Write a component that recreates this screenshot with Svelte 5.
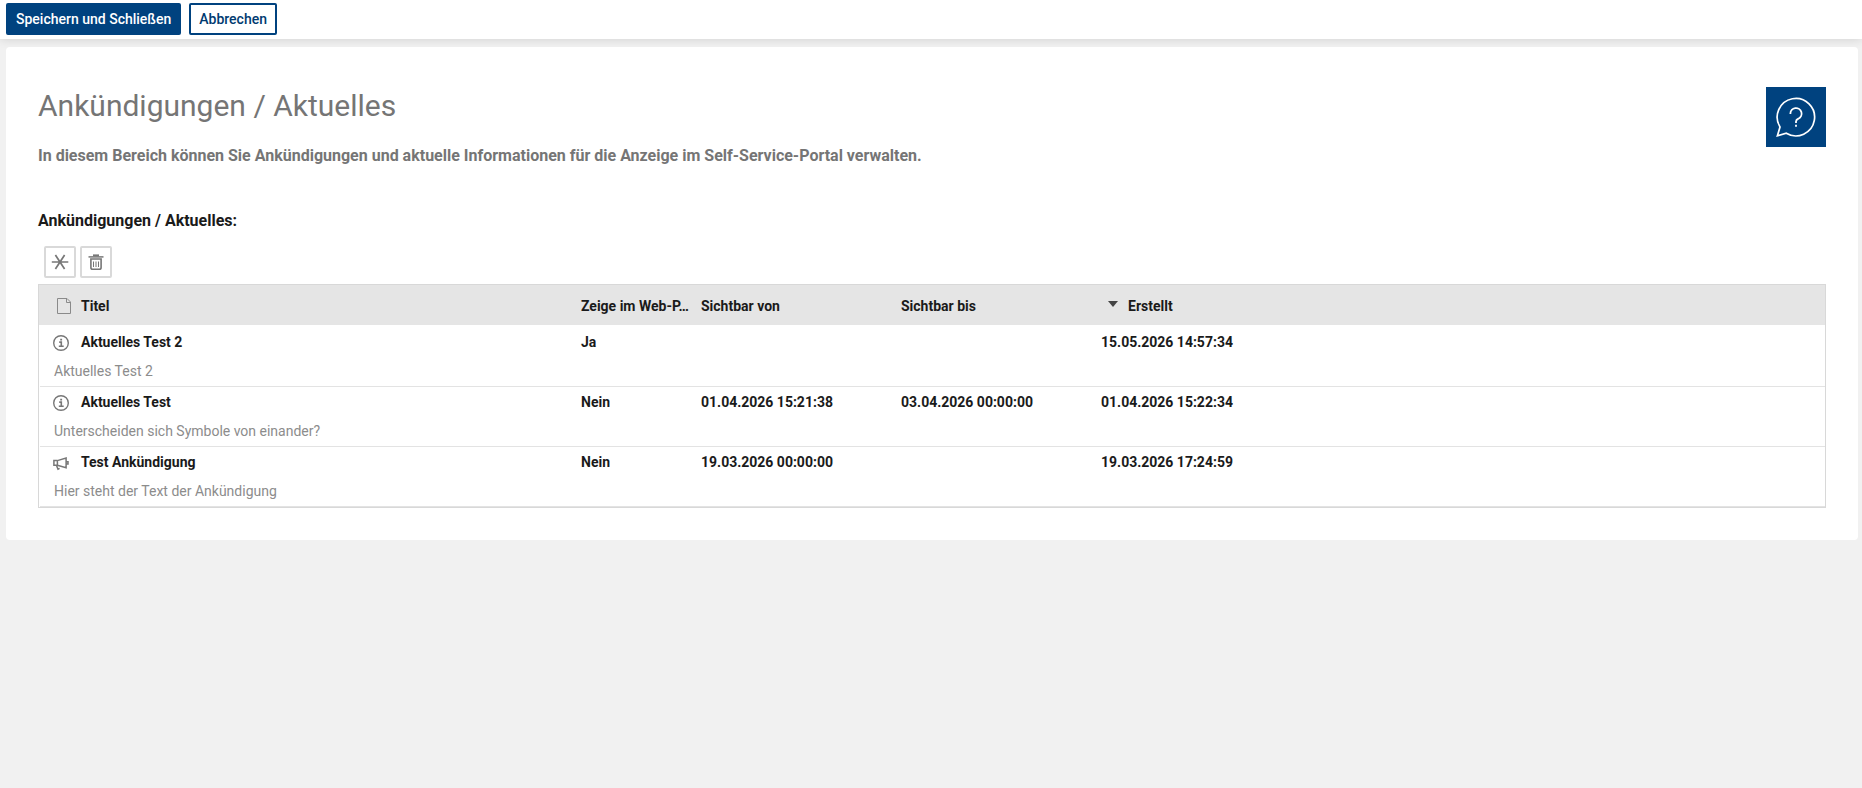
<script>
  const rows = [
    { icon: 'info', title: 'Aktuelles Test 2', web: 'Ja', from: '', to: '', created: '15.05.2026 14:57:34', text: 'Aktuelles Test 2' },
    { icon: 'info', title: 'Aktuelles Test', web: 'Nein', from: '01.04.2026 15:21:38', to: '03.04.2026 00:00:00', created: '01.04.2026 15:22:34', text: 'Unterscheiden sich Symbole von einander?' },
    { icon: 'horn', title: 'Test Ankündigung', web: 'Nein', from: '19.03.2026 00:00:00', to: '', created: '19.03.2026 17:24:59', text: 'Hier steht der Text der Ankündigung' }
  ];
</script>

<header class="toolbar">
  <button class="btn primary">Speichern und Schließen</button>
  <button class="btn">Abbrechen</button>
</header>

<main class="card">
  <div class="head">
    <div>
      <h1>Ankündigungen / Aktuelles</h1>
      <p class="intro">In diesem Bereich können Sie Ankündigungen und aktuelle Informationen für die Anzeige im Self-Service-Portal verwalten.</p>
    </div>
    <button class="help" aria-label="Hilfe">
      <svg width="60" height="60" viewBox="0 0 60 60" fill="none" stroke="#fff">
        <path stroke-width="1.7" d="M14 40A18.7 18.7 0 1 1 20.3 46.2L11.4 48.8Z" />
        <path stroke-width="1.8" d="M24.4 27V26.6A5.6 5.6 0 1 1 32.4 31.7Q30 32.7 30 34.5V36M30 37.8V39.8" />
      </svg>
    </button>
  </div>

  <h2>Ankündigungen / Aktuelles:</h2>

  <div class="actions">
    <button aria-label="Neu">
      <svg width="28" height="28" viewBox="0 0 28 28" fill="none" stroke="#777" stroke-width="1.7">
        <path d="M5.8 14H22.3M9.4 7L18.6 21M18.6 7L9.4 21" />
      </svg>
    </button>
    <button aria-label="Löschen">
      <svg width="28" height="28" viewBox="0 0 28 28" fill="none" stroke="#777">
        <path stroke-width="1.5" d="M6.5 8.9H21.5" />
        <path stroke-width="2" d="M11 7.4H17" />
        <path stroke-width="1.6" d="M8.9 11H19.1V19.4Q19.1 21.2 17.3 21.2H10.7Q8.9 21.2 8.9 19.4Z" />
        <path stroke-width="1" d="M11.5 13.5V19M14 13.5V19M16.5 13.5V19" />
      </svg>
    </button>
  </div>

  <section class="table">
    <div class="grid thead">
      <span class="ico">
        <svg width="16" height="17" viewBox="0 0 16 17" fill="none" stroke="#8a8a8a">
          <path d="M.5 .5H10L13.5 4V15.5H.5V.5M9.5 .5V4.5H13.5" />
        </svg>
      </span>
      <span>Titel</span>
      <span>Zeige im Web-P…</span>
      <span>Sichtbar von</span>
      <span>Sichtbar bis</span>
      <span class="sorted"><i></i>Erstellt</span>
    </div>
    <div class="tbody">
      {#each rows as r}
        <article>
          <div class="grid">
            <span class="ico">
              {#if r.icon === 'info'}
                <svg width="16" height="16" viewBox="0 0 16 16" fill="none" stroke="#777">
                  <circle cx="8" cy="8" r="7.3" stroke-width="1.4" />
                  <path stroke-width="1.6" d="M6.2 7.1H8.3V11.2M5.8 11.3H10.7M7.2 4.6H9.1" />
                </svg>
              {:else}
                <svg width="16" height="16" viewBox="0 0 16 16" fill="none" stroke="#777" stroke-width="1.5">
                  <path d="M.9 5.6H4.4L13.1 3.1V12.7L4.4 10.3H.9ZM4.4 5.6V10.3M3.5 10.5L5 14.2L6.6 13.4M13.4 6.7H15V9H13.4" />
                </svg>
              {/if}
            </span>
            <span>{r.title}</span>
            <span>{r.web}</span>
            <span>{r.from}</span>
            <span>{r.to}</span>
            <span>{r.created}</span>
          </div>
          <p>{r.text}</p>
        </article>
      {/each}
    </div>
  </section>
</main>

<style>
  :global(body) {
    background: #f1f1f1;
    font-family: Roboto, 'Liberation Sans', sans-serif;
    color: #1a1a1a;
  }
  h1, h2, p { margin: 0; }
  button { font: inherit; padding: 0; box-sizing: border-box; }
  svg { display: block; }
  .toolbar {
    display: flex;
    gap: 8px;
    height: 39px;
    box-sizing: border-box;
    padding: 3px 6px;
    background: #fff;
    box-shadow: 0 0 10px rgba(0, 0, 0, 0.14);
  }
  .btn {
    height: 32px;
    padding: 0 8px;
    border: 2px solid #00427f;
    border-radius: 2px;
    background: #fff;
    color: #003a70;
    font-size: 14px;
    font-weight: 500;
    line-height: 26px;
  }
  .btn.primary { background: #00427f; color: #fff; }
  .card {
    position: relative;
    margin: 8px 4px 0 6px;
    height: 493px;
    box-sizing: border-box;
    padding: 40px 32px 0;
    background: #fff;
    border-radius: 4px;
  }
  .head { display: flex; justify-content: space-between; height: 121px; }
  h1 {
    margin-top: 1px;
    font-size: 30px;
    line-height: 36px;
    font-weight: 400;
    color: #757575;
  }
  .intro {
    margin-top: 22px;
    font-size: 16px;
    line-height: 20px;
    font-weight: 700;
    color: #757575;
  }
  .help { width: 60px; height: 60px; border: 0; background: #00427f; }
  h2 { font-size: 16px; line-height: 26px; font-weight: 700; }
  .actions { display: flex; gap: 4px; padding: 12px 6px 6px; }
  .actions button {
    width: 32px;
    height: 32px;
    border: 2px solid #d9d9d9;
    border-radius: 2px;
    background: #fff;
  }
  .table { border: 1px solid #d8d8d8; }
  .grid {
    display: grid;
    grid-template-columns: 42px 500px 120px 200px 200px 1fr;
    font-size: 14px;
    font-weight: 700;
    line-height: 20px;
    white-space: nowrap;
  }
  .thead { height: 29px; padding-top: 11px; background: #e5e5e5; }
  .thead .ico { padding: 2px 0 0 18px; }
  .ico { height: 16px; }
  .sorted { display: flex; }
  .sorted i {
    margin: 5px 10px 0 7px;
    width: 0;
    height: 0;
    border: 5.5px solid transparent;
    border-top: 6px solid #444;
    border-bottom: 0;
  }
  .tbody { padding-top: 2px; }
  article {
    height: 59px;
    margin-left: 1px;
    border-bottom: 1px solid #e3e3e3;
  }
  article .grid { grid-template-columns: 41px 500px 120px 200px 200px 1fr; height: 34px; }
  article .grid span { padding-top: 5px; }
  article .grid .ico { padding: 8px 0 0 13px; }
  article p {
    padding-left: 14px;
    font-size: 14px;
    line-height: 20px;
    color: #8c8c8c;
  }
</style>
